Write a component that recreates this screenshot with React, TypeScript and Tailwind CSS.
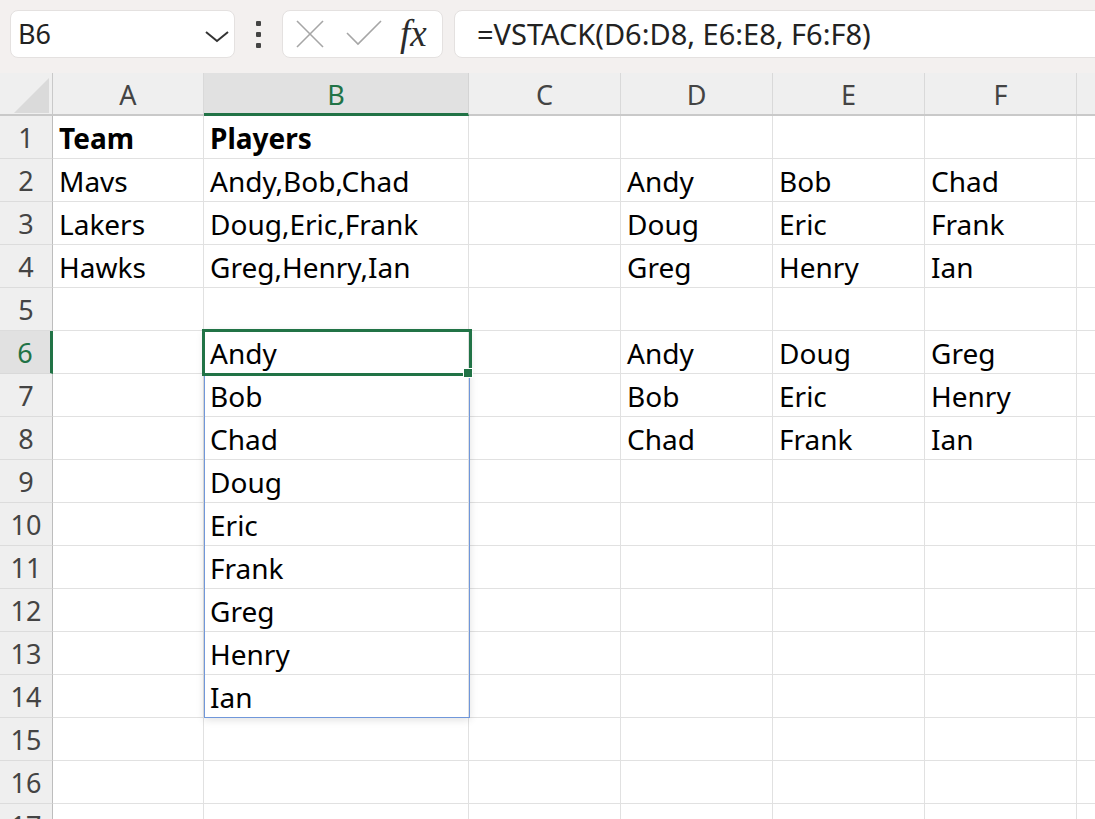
const cols = [
    { key: 'A', w: 'w-[151px]' },
    { key: 'B', w: 'w-[265px]' },
    { key: 'C', w: 'w-[152px]' },
    { key: 'D', w: 'w-[152px]' },
    { key: 'E', w: 'w-[152px]' },
    { key: 'F', w: 'w-[152px]' },
    { key: 'G', w: 'w-[152px]' },
];

// cell values per row, index matches cols
const data: Record<number, string[]> = {
    1: ['Team', 'Players'],
    2: ['Mavs', 'Andy,Bob,Chad', '', 'Andy', 'Bob', 'Chad'],
    3: ['Lakers', 'Doug,Eric,Frank', '', 'Doug', 'Eric', 'Frank'],
    4: ['Hawks', 'Greg,Henry,Ian', '', 'Greg', 'Henry', 'Ian'],
    6: ['', 'Andy', '', 'Andy', 'Doug', 'Greg'],
    7: ['', 'Bob', '', 'Bob', 'Eric', 'Henry'],
    8: ['', 'Chad', '', 'Chad', 'Frank', 'Ian'],
    9: ['', 'Doug'],
    10: ['', 'Eric'],
    11: ['', 'Frank'],
    12: ['', 'Greg'],
    13: ['', 'Henry'],
    14: ['', 'Ian'],
};

const rows = Array.from({ length: 17 }, (_, i) => i + 1);

const Toolbar = () => (
    <div className="h-[73px] bg-[#f3f0ef] flex items-start pt-[10px] pl-[10px] overflow-hidden">
        <div className="w-[225px] h-[48px] shrink-0 rounded-[8px] bg-white border border-[#e4e1e0] flex items-center justify-between pl-[7px] pr-[3px]">
            <span className="text-[27px] leading-[28px] text-[#222]">B6</span>
            <svg width="28" height="14" viewBox="0 0 28 14" className="mt-[3px]">
                <polyline points="3,3 14,12 25,3" fill="none" stroke="#333" strokeWidth="2" />
            </svg>
        </div>
        <div className="w-[47px] h-[48px] shrink-0 flex flex-col items-center justify-center gap-[6px]">
            <div className="w-[5px] h-[5px] rounded-[1px] bg-[#444]" />
            <div className="w-[5px] h-[5px] rounded-[1px] bg-[#444]" />
            <div className="w-[5px] h-[5px] rounded-[1px] bg-[#444]" />
        </div>
        <div className="w-[161px] h-[48px] shrink-0 rounded-[8px] bg-white border border-[#e4e1e0] flex items-center pl-[12px]">
            <svg width="30" height="30" viewBox="0 0 30 30">
                <line x1="2" y1="2" x2="28" y2="28" stroke="#a6a6a6" strokeWidth="1.6" />
                <line x1="28" y1="2" x2="2" y2="28" stroke="#a6a6a6" strokeWidth="1.6" />
            </svg>
            <svg width="38" height="30" viewBox="0 0 38 30" className="ml-[20px]">
                <polyline points="2,14 13,25 36,2" fill="none" stroke="#a6a6a6" strokeWidth="1.6" />
            </svg>
            <span className="ml-[17px] text-[37px] leading-[30px] italic text-[#2b2b2b]" style={{ fontFamily: '"Liberation Serif", serif' }}>fx</span>
        </div>
        <div className="w-[680px] h-[48px] shrink-0 ml-[11px] rounded-[8px] bg-white border border-[#e4e1e0] flex items-center pl-[22px]">
            <span className="text-[29px] leading-[30px] text-[#222]">=VSTACK(D6:D8, E6:E8, F6:F8)</span>
        </div>
    </div>
);

const ColumnHeaders = () => (
    <div className="flex h-[43px] bg-[#efefef] border-b-2 border-[#c9c9c9]">
        <div className="w-[53px] shrink-0 relative border-r border-[#c9c9c9]">
            <svg width="36" height="36" viewBox="0 0 36 36" className="absolute left-[14px] top-[5px]">
                <polygon points="35,0 35,35 0,35" fill="#dadada" />
            </svg>
        </div>
        {cols.map((c) =>
            c.key === 'B' ? (
                <div key={c.key} className={`${c.w} shrink-0 bg-[#e1e1e1] border-r border-[#d4d4d4] border-b-[3px] border-b-[#217346] -mb-[2px] flex justify-center pt-[8px] text-[27px] leading-[28px] text-[#217346]`}>
                    {c.key}
                </div>
            ) : (
                <div key={c.key} className={`${c.w} shrink-0 border-r border-[#d9d9d9] flex justify-center pt-[8px] text-[27px] leading-[28px] text-[#444]`}>
                    {c.key === 'G' ? '' : c.key}
                </div>
            )
        )}
    </div>
);

const Row = ({ n }: { n: number }) => {
    const vals = data[n] || [];
    const selected = n === 6;
    return (
        <div className="flex h-[43px]">
            <div className={selected
                ? 'w-[53px] shrink-0 bg-[#e1e1e1] border-r-[3px] border-[#217346] border-b border-b-[#d9d9d9] flex justify-center pt-[8px] text-[27px] leading-[28px] text-[#217346]'
                : 'w-[53px] shrink-0 bg-[#efefef] border-r border-[#bdbdbd] border-b border-b-[#dcdcdc] flex justify-center pt-[8px] text-[27px] leading-[28px] text-[#444]'}>
                {n}
            </div>
            {cols.map((c, i) => (
                <div key={c.key} className={`${c.w} shrink-0 border-r border-b border-[#e1e1e1] pl-[6px] pt-[8px] text-[28px] leading-[28px] text-black whitespace-nowrap overflow-hidden ${n === 1 ? 'font-bold' : ''}`}>
                    {vals[i] || ''}
                </div>
            ))}
        </div>
    );
};

export default function App() {
    return (
        <div className="w-[1095px] h-[819px] overflow-hidden bg-white relative" style={{ fontFamily: '"Noto Sans", sans-serif' }}>
            <Toolbar />
            <ColumnHeaders />
            <div>
                {rows.map((n) => (
                    <Row key={n} n={n} />
                ))}
            </div>
            {/* spill range B6:B14 */}
            <div className="absolute left-[204px] top-[330px] w-[266px] h-[388px] border border-[#7097da] shadow-[0_2px_8px_rgba(0,0,0,0.12)] pointer-events-none" />
            {/* active cell B6 */}
            <div className="absolute left-[202px] top-[329px] w-[270px] h-[47px] border-[3px] border-[#217346] pointer-events-none" />
            <div className="absolute left-[463px] top-[368px] w-[10px] h-[10px] bg-[#217346] border border-white pointer-events-none" />
        </div>
    );
}
